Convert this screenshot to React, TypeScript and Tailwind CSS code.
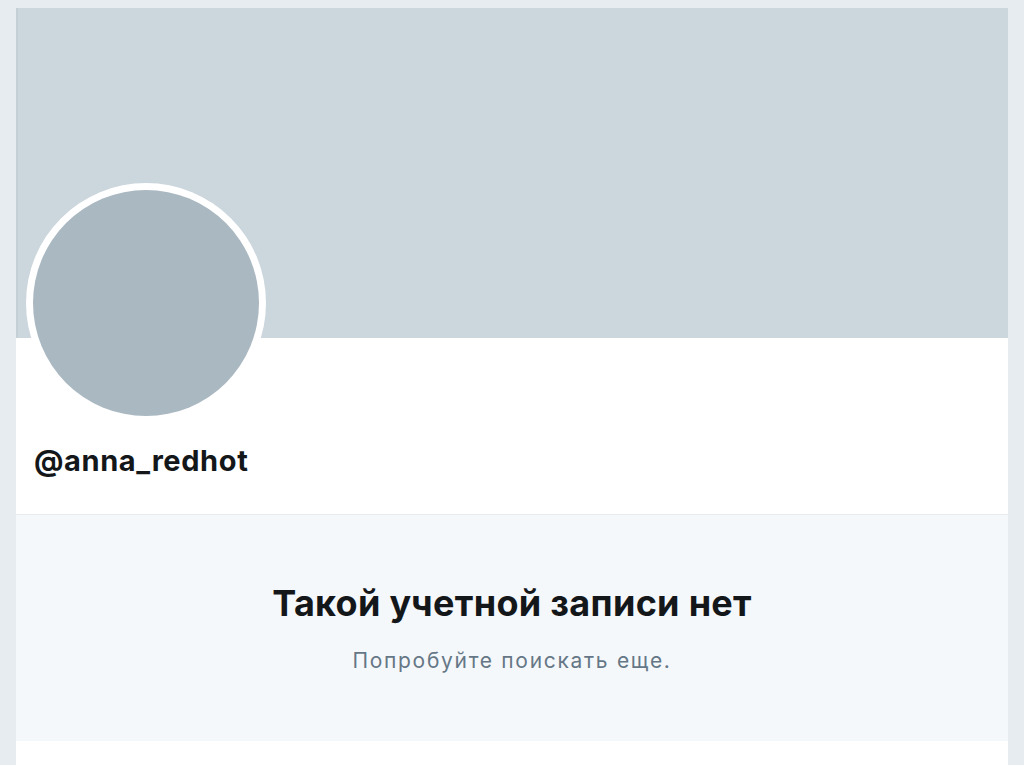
import React from "react";

export default function App() {
  return (
    <div
      className="w-[1024px] h-[765px] overflow-hidden bg-[#e6ecf0] pt-[8px] px-[16px]"
      style={{ fontFamily: 'Inter, "Liberation Sans", Arial, sans-serif' }}
    >
      <div className="w-[992px] h-full bg-white flex flex-col">
        <div className="h-[330px] bg-[#ccd6dd] border-l-2 border-[#c4d0d6] shrink-0" />
        <div className="relative h-[177px] shrink-0 border-b border-[#e6ecf0]">
          <div className="absolute left-[10px] top-[-155px] w-[240px] h-[240px] rounded-full bg-white p-[7px]">
            <div className="w-full h-full rounded-full bg-[#aab8c2]" />
          </div>
          <div className="pt-[105px] pl-[18px] text-[29px] font-bold leading-[36px] tracking-[0.6px] text-[#14171a]">
            @anna_redhot
          </div>
        </div>
        <div className="h-[226px] bg-[#f5f8fa] flex flex-col items-center pt-[66px] shrink-0">
          <div className="text-[36px] font-bold leading-[44px] tracking-[0.3px] text-[#14171a]">
            Такой учетной записи нет
          </div>
          <div className="mt-[24px] text-[21px] leading-[24px] tracking-[1.7px] text-[#657786]">
            Попробуйте поискать еще.
          </div>
        </div>
        <div className="flex-1 bg-white" />
      </div>
    </div>
  );
}
